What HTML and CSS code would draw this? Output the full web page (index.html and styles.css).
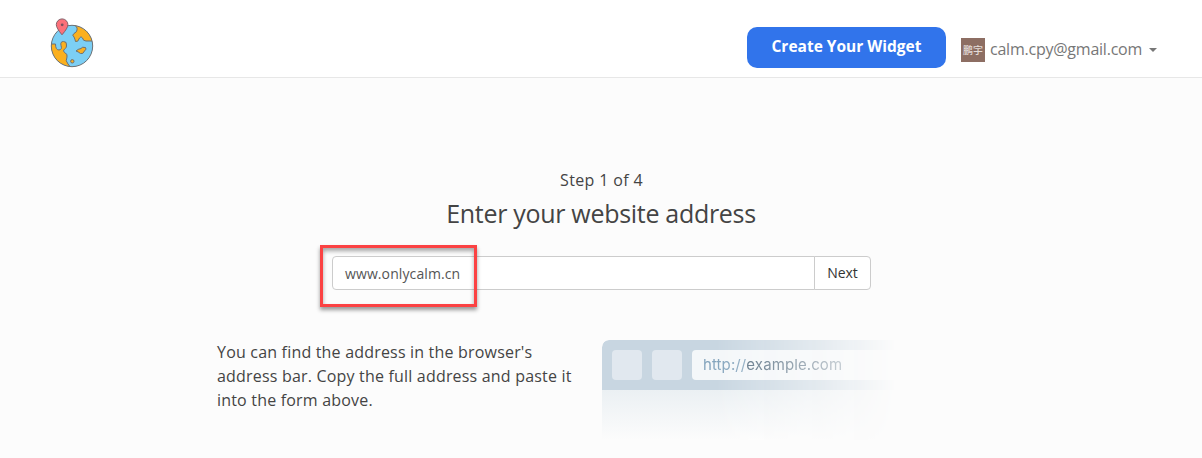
FILE: index.html
```html
<!DOCTYPE html>
<html lang="en">
<head>
<meta charset="utf-8">
<title>Create Your Widget</title>
<link rel="stylesheet" href="styles.css">
</head>
<body>
<header class="navbar">
  <a class="logo">
    <svg width="46" height="52" viewBox="0 0 46 52">
      <defs><clipPath id="globe"><circle cx="23" cy="29" r="20.7"/></clipPath></defs>
      <circle cx="23" cy="29" r="20.7" fill="#7ccff5"/>
      <g clip-path="url(#globe)" fill="#fbb01f" stroke="#6b7075" stroke-width="1" stroke-linejoin="round">
        <path d="M1 27H6.500Q6.500 33 10 33Q13.500 32.500 12 28.500Q11 24.500 14.500 24.500Q18 24.500 17.500 28Q18 31 15.500 32Q13.500 34 15.500 35.500Q19 37 18 40Q16 44 19 47Q20 49 23 51H0Z"/>
        <path d="M23 7Q29 9 28 13Q28 15 25 16.500Q22.500 18 25 20Q26 22 26.500 24.500Q29 25.500 30.500 21Q32 18.500 33.500 21Q34 24 37 24H46V5Z"/>
        <path d="M27 34Q29 32 32 31.500Q33 29.500 36.500 30.500Q38 32 35.500 34Q34 37.500 31.500 36.500Q29 34.500 27 34Z"/>
        <circle cx="23.300" cy="44.300" r="1.700"/>
      </g>
      <circle cx="23" cy="29" r="20.700" fill="none" stroke="#6b7075" stroke-width="1"/>
      <path d="M13 17.800Q7.300 11 7.300 7.700A5.800 5.800 0 0 1 18.900 7.700Q18.900 11 13 17.800Z" fill="#fb7079" stroke="#846069" stroke-width="1"/>
      <circle cx="13.200" cy="7.800" r="1.400" fill="#79515f"/>
    </svg>
  </a>
  <div class="nav-right">
    <a class="create"><span class="create-label">Create Your Widget</span></a>
    <a class="account">
      <span class="avatar">鹏宇</span>
      <span class="email">calm.cpy@gmail.com</span>
      <span class="caret"></span>
    </a>
  </div>
</header>
<main class="content">
  <p class="step"><span>Step 1 of 4</span></p>
  <h1 class="title"><span>Enter your website address</span></h1>
  <form class="address-form">
    <div class="field"><span>www.onlycalm.cn</span><div class="highlight"></div></div>
    <button class="next" type="button"><span>Next</span></button>
  </form>
  <section class="help">
    <p class="help-text"><span>You can find the address in the browser's</span><br><span>address bar. Copy the full address and paste it</span><br><span>into the form above.</span></p>
    <div class="browser">
      <div class="browser-bar">
        <i class="tool"></i><i class="tool"></i>
        <div class="url"><span class="scheme">http://</span><span class="host">example.com</span></div>
      </div>
      <div class="browser-page"></div>
    </div>
  </section>
</main>
</body>
</html>
```
FILE: styles.css
```css
* { box-sizing: border-box; }
body {
  margin: 0;
  height: 458px;
  overflow: hidden;
  background: #fcfcfc;
  color: #444;
  font: 16px/24px "Open Sans", "Noto Sans CJK SC", sans-serif;
}
.navbar {
  display: flex;
  justify-content: space-between;
  height: 78px;
  padding: 17px 45px 0 49px;
  background: #fff;
  border-bottom: 1px solid #e7e7e7;
}
.logo svg { display: block; }
.nav-right { display: flex; align-items: flex-start; }
.create {
  width: 199px;
  height: 41px;
  margin-top: 10px;
  border-radius: 10px;
  background: #3174eb;
  color: #fff;
  font-size: 15.5px;
  font-weight: 700;
  line-height: 39px;
  text-align: center;
}
.account {
  display: flex;
  align-items: center;
  margin: 20px 0 0 15px;
  color: #777;
  white-space: nowrap;
}
.avatar {
  width: 24px;
  height: 24px;
  margin-right: 5px;
  background: #8d6e63;
  color: #e3dbd8;
  font: 500 10px/23px "Noto Sans CJK SC", sans-serif;
  text-align: center;
}
.email { width: 152px; height: 26px; letter-spacing: -.23px; }
.caret {
  margin-left: 7px;
  border: 4px solid transparent;
  border-top-color: #777;
  border-bottom: 0;
}
.content { padding-top: 90px; }
.step { margin: 0; padding-left: 1px; letter-spacing: .36px; text-align: center; }
.title {
  margin: 4px 0 0;
  font-size: 25px;
  font-weight: 400;
  line-height: 34px;
  letter-spacing: -.3px;
  text-align: center;
}
.address-form {
  display: flex;
  width: 539px;
  height: 34px;
  margin: 26px 0 0 332px;
  font-size: 14px;
}
.field {
  position: relative;
  width: 483px;
  padding-left: 12px;
  border: 1px solid #ccc;
  border-radius: 4px 0 0 4px;
  background: #fff;
  color: #555;
  line-height: 33px;
  letter-spacing: .1px;
}
.highlight {
  position: absolute;
  top: -12px;
  left: -13px;
  width: 157px;
  height: 62px;
  border: 3px solid #fb4243;
  box-shadow: 0 3px 4px rgba(0,0,0,.4), inset 0 3px 4px rgba(0,0,0,.35);
}
.next {
  width: 57px;
  margin-left: -1px;
  padding: 0;
  border: 1px solid #ccc;
  border-radius: 0 4px 4px 0;
  background: #fff;
  color: #333;
  font: inherit;
  line-height: 30px;
}
.help { display: flex; margin: 50px 0 0 217px; }
.help-text { width: 385px; margin: 0; letter-spacing: .19px; white-space: nowrap; }
.browser {
  width: 300px;
  height: 100px;
  border-radius: 7px 0 0 0;
  overflow: hidden;
  -webkit-mask-image: linear-gradient(to right, #000 38%, rgba(0,0,0,.5) 70%, transparent 98%);
  mask-image: linear-gradient(to right, #000 38%, rgba(0,0,0,.5) 70%, transparent 98%);
}
.browser-bar {
  display: flex;
  gap: 10px;
  height: 50px;
  padding: 10px 0 10px 10px;
  background: #c8d6e1;
}
.tool { width: 30px; height: 30px; border-radius: 4px; background: #e1e8ef; }
.url {
  flex: 1;
  padding-left: 11px;
  border-radius: 4px 0 0 4px;
  background: #f4f7f9;
  font: 15px/30px Inter, sans-serif;
  letter-spacing: .1px;
}
.scheme { color: #85a5bd; }
.host { color: #536b7e; }
.browser-page { height: 50px; background: linear-gradient(#ebf0f3, #fcfcfc); }
```
